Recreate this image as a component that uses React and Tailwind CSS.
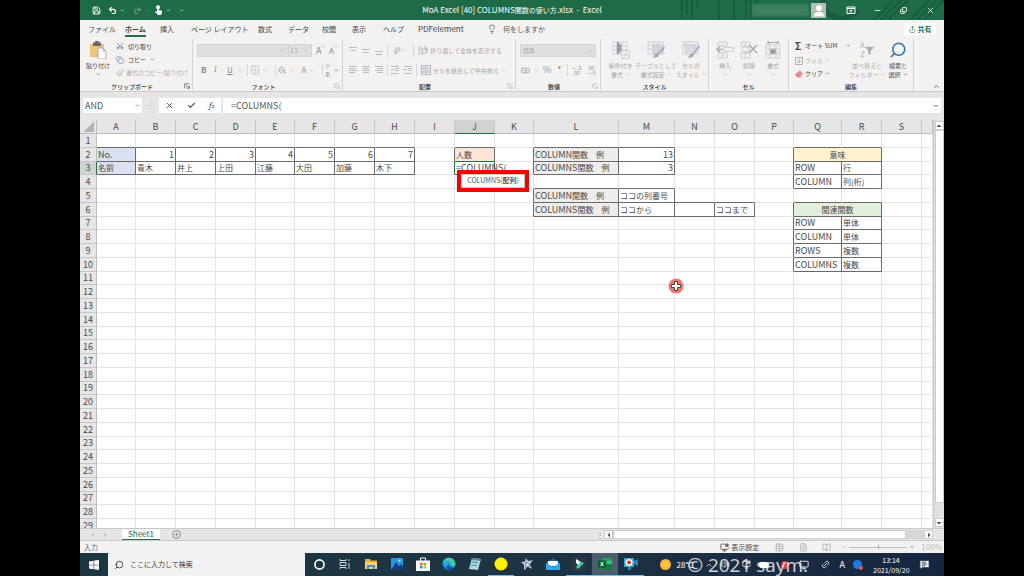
import React from 'react';
import {
  Save, Undo2, Redo2, ChevronDown, ChevronUp, Minus, X, Check, Scissors, Copy, Paintbrush,
  Lightbulb, Share, Search, Grid2x2, PaintBucket, Banknote, Eraser, Filter, Plus, Circle,
  MonitorCog, Table, BookOpen, FileText, Volume2, Monitor, Link2, MessageSquareText, User,
} from 'lucide-react';

const columns = [
  ['A', 39], ['B', 40], ['C', 40], ['D', 40], ['E', 39], ['F', 40], ['G', 40], ['H', 40], ['I', 40], ['J', 40],
  ['K', 39], ['L', 85], ['M', 56], ['N', 40], ['O', 40], ['P', 39], ['Q', 48], ['R', 40], ['S', 40], ['', null],
];

const cells = {
  A2: { t: 'No.', bg: 'bg-[#d9e1f2]' },
  B2: { t: '1', right: true }, C2: { t: '2', right: true }, D2: { t: '3', right: true }, E2: { t: '4', right: true },
  F2: { t: '5', right: true }, G2: { t: '6', right: true }, H2: { t: '7', right: true },
  A3: { j: '名前', bg: 'bg-[#d9e1f2]' },
  B3: { j: '青木' }, C3: { j: '井上' }, D3: { j: '上田' }, E3: { j: '江藤' }, F3: { j: '大田' }, G3: { j: '加藤' }, H3: { j: '木下' },
  J2: { j: '人数', bg: 'bg-[#fce4d6]' },
  J3: { t: '=COLUMNS(', active: true },
  L2: { t: 'COLUMN', j: '関数　例', bg: 'bg-[#ededed]' }, M2: { t: '13', right: true },
  L3: { t: 'COLUMNS', j: '関数　例', bg: 'bg-[#ededed]' }, M3: { t: '3', right: true },
  L5: { t: 'COLUMN', j: '関数　例', bg: 'bg-[#ededed]' }, M5: { j: 'ココの列番号' },
  L6: { t: 'COLUMNS', j: '関数　例', bg: 'bg-[#ededed]' }, M6: { j: 'ココから' }, N6: {}, O6: { j: 'ココまで' },
  Q2: { j: '意味', bg: 'bg-[#fff2cc]', span: 2 }, R2: { hidden: true },
  Q3: { t: 'ROW' }, R3: { j: '行' }, Q4: { t: 'COLUMN' }, R4: { j: '列(桁)' },
  Q6: { j: '関連関数', bg: 'bg-[#e2efda]', span: 2 }, R6: { hidden: true },
  Q7: { t: 'ROW' }, R7: { j: '単体' }, Q8: { t: 'COLUMN' }, R8: { j: '単体' },
  Q9: { t: 'ROWS' }, R9: { j: '複数' }, Q10: { t: 'COLUMNS' }, R10: { j: '複数' },
};

const at = (c, r) => (columns[c] ? cells[columns[c][0] + r] : undefined);

function Cell({ c, r }) {
  const cell = at(c, r);
  if (cell?.hidden) return null;
  const span = cell?.span || 1;
  const right = at(c + span, r);
  const below = at(c, r + 1);
  const rightColor = cell?.active || right?.active ? 'border-r-[#217346]' : cell || right ? 'border-r-[#6a6a6a]' : 'border-r-[#e4e4e4]';
  const bottomColor = cell?.active || below?.active ? 'border-b-[#217346]' : cell || below ? 'border-b-[#6a6a6a]' : 'border-b-[#e4e4e4]';
  const align = cell?.right ? 'text-right' : cell?.span ? 'text-center' : 'text-left';
  return (
    <td colSpan={span} className={`relative border-r border-b px-px py-0 whitespace-nowrap ${rightColor} ${bottomColor} ${align} ${cell?.bg || ''}`}>
      {cell?.t && <span className="text-[9px]">{cell.t}</span>}
      {cell?.j && <span className="text-[8px]">{cell.j}</span>}
      {cell?.active && (
        <div className="absolute top-2 left-0.5 z-10 flex h-[22px] w-[72px] items-stretch border-4 border-[#f80000] bg-white text-[7px] text-[#555]">
          <span className="flex flex-1 items-center justify-center border border-[#c8c8c8]"><span>COLUMNS(<b>配列</b>)</span></span>
        </div>
      )}
    </td>
  );
}

function Sheet() {
  const rows = Array.from({ length: 29 }, (_, i) => i + 1);
  return (
    <table className="h-[413px] w-full table-fixed border-separate border-spacing-0 bg-white text-[9px] leading-[11px] text-[#4a4a4a]">
      <colgroup>
        <col className="w-[17px]" />
        {columns.map(([n, w], i) => <col key={i} style={w ? { width: w } : undefined} />)}
      </colgroup>
      <thead>
        <tr>
          <th aria-label="すべて選択" className="h-[14px] border-r border-b border-[#bdbdbd] bg-[#e6e6e6] p-0">
            <svg viewBox="0 0 16 13" className="ml-auto h-[13px] w-4"><path d="M14 1.500V12H3.500z" fill="#b3b3b3" /></svg>
          </th>
          {columns.map(([n], i) => (
            <th key={i} className={n === 'J'
              ? 'h-[14px] border-r border-b border-r-[#c6c6c6] border-b-[#217346] bg-[#d2d2d2] p-0 text-[9px] font-normal text-[#217346]'
              : 'h-[14px] border-r border-b border-r-[#c6c6c6] border-b-[#bdbdbd] bg-[#e6e6e6] p-0 text-[9px] font-normal'}>{n}</th>
          ))}
        </tr>
      </thead>
      <tbody>
        {rows.map((r) => (
          <tr key={r}>
            <th className={r === 3
              ? 'border-r border-b border-r-[#217346] border-b-[#c6c6c6] bg-[#d2d2d2] p-0 text-[9px] font-normal text-[#217346]'
              : 'border-r border-b border-r-[#bdbdbd] border-b-[#c6c6c6] bg-[#e6e6e6] p-0 text-[9px] font-normal'}>{r}</th>
            {columns.map((_, c) => <Cell key={c} c={c} r={r} />)}
          </tr>
        ))}
      </tbody>
    </table>
  );
}

const Caret = ({ dark }) => <ChevronDown size={5} strokeWidth={3} className={dark ? 'shrink-0 text-[#555]' : 'shrink-0 text-[#b0b0b0]'} />;
const Sep = () => <span className="h-3 w-px shrink-0 bg-[#d8d8d6]" />;

function Group({ label, width, launcher, children }) {
  return (
    <section className={`${width} my-px flex shrink-0 flex-col border-r border-[#d2d2d0]`}>
      <div className="h-[43px]">{children}</div>
      <div className="flex h-2 items-center text-[6px] font-medium text-[#333]">
        <span className="flex-1 text-center">{label}</span>
        {launcher && (
          <button aria-label={`${label}の設定`} className="mr-0.5">
            <svg viewBox="0 0 8 8" className="size-1.5" fill="none" stroke={launcher}><path d="M1 7V1h6M3 3l4 4M7 4v3H4" /></svg>
          </button>
        )}
      </div>
    </section>
  );
}

function Big({ icon, lines, dark, width }) {
  return (
    <button className={`${width} flex shrink-0 flex-col items-center text-[6px] leading-[9px] whitespace-nowrap ${dark ? 'text-[#444]' : 'text-[#a8a8a8]'}`}>
      <span className="mb-0.5 flex h-[18px] items-center">{icon}</span>
      <span>{lines[0]}</span>
      <span className="flex h-[9px] items-center gap-0.5">{lines[1]}<Caret dark={dark} /></span>
    </button>
  );
}

const Lines = ({ d }) => (
  <button aria-label="配置" className="w-[13px] shrink-0 text-[#bbb]">
    <svg viewBox="0 0 10 10" className="size-2.5" stroke="currentColor" fill="none"><path d={d} /></svg>
  </button>
);

const GridIcon = ({ children }) => (
  <svg viewBox="0 0 18 18" className="size-[18px]" fill="none" stroke="#cfcbd5">
    {children}
  </svg>
);

function TitleBar() {
  return (
    <header className="relative grid h-5 shrink-0 grid-cols-3 items-center bg-[#1d6b47] text-white">
      <svg viewBox="0 0 270 20" preserveAspectRatio="xMaxYMid slice" className="absolute right-0 h-5 w-[270px]" stroke="#185d3d" fill="none" strokeWidth="2">
        <path d="M8 0v18M13 0v15M18 0v18M23 0v10M45 0v20M60 0v20M72 0v18M77 0v18M82 0v14M200 20l20-20M207 20l20-20M214 20l20-20M236 20l20-20M243 20l20-20M250 20l20-20" />
        <path d="M148 0a20 20 0 0 0 36 10" strokeWidth="5" />
      </svg>
      <div className="relative flex items-center pl-3">
        <button aria-label="上書き保存" className="w-4"><Save size={9} strokeWidth={2.500} /></button>
        <button aria-label="元に戻す" className="w-3"><Undo2 size={9} strokeWidth={3} /></button>
        <ChevronDown size={5} strokeWidth={3} className="mr-2" />
        <button aria-label="やり直し" className="w-3 opacity-30"><Redo2 size={9} strokeWidth={3} /></button>
        <ChevronDown size={5} strokeWidth={3} className="mr-1 opacity-30" />
        <button aria-label="タッチ" className="w-3">
          <svg viewBox="0 0 10 10" className="size-2.5" fill="white"><circle cx="4" cy="2.200" r="2" /><path d="M3.200 2h1.600v3L8 5.800V8L7 10H4L1 6.800l.800-.700 1.400.900z" /></svg>
        </button>
        <ChevronDown size={5} strokeWidth={3} className="mr-2" />
        <ChevronDown size={5} strokeWidth={3} />
      </div>
      <h1 className="relative text-center text-[8px] whitespace-nowrap">MoA Excel [40] COLUMNS<span className="text-[7px]">関数の使い方</span>.xlsx &nbsp;-&nbsp; Excel</h1>
      <div className="relative flex items-center justify-end">
        <span className="h-3 w-[57px] bg-[#4a8a6c] opacity-70 blur-[1px]" />
        <span className="mr-3 ml-0.5 flex size-[15px] items-end justify-center overflow-hidden bg-[#b9bcba]"><User size={14} fill="white" strokeWidth={2} /></span>
        <button aria-label="リボンの表示オプション" className="flex w-[26px] justify-center">
          <svg viewBox="0 0 10 10" className="size-2.5" fill="none" stroke="white"><path d="M1 2h8v6.500H1zM1 3.500h8M5 8V5M3.500 6.200 5 4.700l1.500 1.500" /></svg>
        </button>
        <button aria-label="最小化" className="flex w-[26px] justify-center"><Minus size={9} /></button>
        <button aria-label="元のサイズに戻す" className="flex w-[27px] justify-center"><Copy size={7} strokeWidth={3} className="-scale-x-100 rotate-180" /></button>
        <button aria-label="閉じる" className="flex w-[27px] justify-center"><X size={9} /></button>
      </div>
    </header>
  );
}

const tabs = [
  ['ファイル', 'w-[37px]'], ['ホーム', 'w-[35px]'], ['挿入', 'w-[31px]'], ['ページ レイアウト', 'w-[67px]'], ['数式', 'w-[30px]'],
  ['データ', 'w-[34px]'], ['校閲', 'w-[30px]'], ['表示', 'w-[31px]'], ['ヘルプ', 'w-[35px]'], ['PDFelement', 'w-[69px]'],
];

function Tabs() {
  return (
    <nav className="flex h-[18px] shrink-0 items-center bg-[#f3f2f1] pl-2 text-[7px] text-[#444]">
      {tabs.map(([t, w]) => (
        <button key={t} className={`${w} shrink-0 text-left whitespace-nowrap`}>
          <span className={t === 'ホーム' ? 'inline-block border-b-2 border-[#217346] pt-0.5 leading-3 font-bold' : t === 'PDFelement' ? 'text-[8px]' : ''}>{t}</span>
        </button>
      ))}
      <label className="flex items-center gap-1.5">
        <Lightbulb size={10} strokeWidth={1.500} />
        <input aria-label="操作アシスト" placeholder="何をしますか" className="w-16 bg-transparent placeholder:text-[#555]" />
      </label>
      <button className="mr-2 ml-auto flex h-3 w-8 items-center justify-center gap-0.5 rounded-xs bg-white font-bold text-[#217346]"><Share size={7} />共有</button>
    </nav>
  );
}

function Ribbon() {
  return (
    <div className="flex h-[54px] shrink-0 border-b border-[#c8c8c8] bg-[#f3f2f1] whitespace-nowrap">
      <Group label="クリップボード" width="w-[113px]" launcher="#555">
        <div className="flex pt-0.5">
          <Big dark width="w-9" lines={['貼り付け', '']} icon={
            <svg viewBox="0 0 18 18" className="size-[18px]"><path d="M1 3h14v13H1z" fill="#efc377" /><path d="M4 1.500h2a2 2 0 0 1 4 0h2V5H4z" fill="#666" /><path d="M9 7h5l3 3v8H9z" fill="white" stroke="#999" strokeWidth=".8" /><path d="M14 7v3h3" fill="none" stroke="#999" strokeWidth=".8" /></svg>
          } />
          <div className="flex flex-col text-[6px] text-[#444]">
            <button className="flex h-[10px] items-center gap-1"><Scissors size={8} className="-rotate-90 text-[#4472a8]" />切り取り</button>
            <button className="mt-0.5 flex h-[13px] items-center gap-1"><Copy size={8} className="text-[#6d8bb0]" />コピー<Caret dark /></button>
            <button className="flex h-[13px] items-center gap-0.5 text-[#b0b0b0]"><Paintbrush size={8} />書式のコピー/貼り付け</button>
          </div>
        </div>
      </Group>
      <Group label="フォント" width="w-[150px]" launcher="#bbb">
        <div className="flex h-[23px] items-center pl-1 text-[#888]">
          <label className="flex h-[13px] w-[92px] items-center justify-end border border-[#d6d5d0] bg-[#e1dfdd] pr-1">
            <select aria-label="フォント" className="w-full appearance-none text-[7px]"><option></option></select><Caret />
          </label>
          <label className="flex h-[13px] w-[23px] items-center border border-l-0 border-[#d6d5d0] bg-[#e1dfdd] pr-0.5 pl-px text-[#aaa]">
            <select aria-label="フォント サイズ" className="w-full appearance-none text-[7px]"><option>11</option></select><Caret />
          </label>
          <button className="ml-1 flex w-[13px] text-[9px]">A<ChevronUp size={4} strokeWidth={3} /></button>
          <button className="flex text-[8px]">A<ChevronDown size={4} strokeWidth={3} /></button>
        </div>
        <div className="flex h-[16px] items-center pl-2 text-[8px] text-[#888]">
          <button className="w-[13px] text-left font-bold">B</button>
          <button className="w-[13px] text-left font-serif italic">I</button>
          <button className="w-[11px] text-left underline">U</button>
          <Caret /><span className="w-1" /><Sep />
          <button aria-label="罫線" className="ml-0.5 w-3 text-[#bbb]"><Grid2x2 size={10} strokeWidth={1.500} /></button><Caret /><span className="w-2" /><Sep />
          <button aria-label="塗りつぶし" className="mx-0.5 w-2.5 text-[#999]"><PaintBucket size={8} /></button><Caret />
          <button aria-label="フォントの色" className="ml-1 w-2.5">A</button><Caret /><span className="w-2" /><Sep />
          <button aria-label="ふりがな" className="mr-1 ml-0.5 flex flex-col text-[5px] leading-[8px]"><span>ア</span><span>亜</span></button><Caret dark />
        </div>
      </Group>
      <Group label="配置" width="w-[173px]" launcher="#bbb">
        <div className="flex h-[23px] items-center pl-[5px] text-[6px] text-[#a8a8a8]">
          <Lines d="M1 1.500h8M2 4.500h6" /><Lines d="M1 3.500h8M2 6.500h6" /><Lines d="M1 5.500h8M2 8.500h6" />
          <Sep /><button className="ml-1 -rotate-45 text-[7px]">ab</button><Caret /><span className="w-2" /><Sep />
          <button className="ml-1 flex items-center gap-0.5"><svg viewBox="0 0 10 10" className="size-2.5" fill="none" stroke="#b5b5b5"><path d="M1 0v9M3 1v3h2V2M7 0v4h2V2H7M9 4v3H3M5 5 3 7l2 2" /></svg>折り返して全体を表示する</button>
        </div>
        <div className="flex h-[16px] items-center pl-[5px] text-[6px] text-[#a8a8a8]">
          <Lines d="M1 1.500h8M1 3.500h6M1 5.500h8M1 7.500h6" /><Lines d="M1 1.500h8M2 3.500h6M1 5.500h8M2 7.500h6" /><Lines d="M1 1.500h8M3 3.500h6M1 5.500h8M3 7.500h6" />
          <Sep /><span className="w-0.5" />
          <Lines d="M1 1.500h8M5 3.500h4M5 5.500h4M1 8.500h8M4 4.500H1" /><Lines d="M1 1.500h8M5 3.500h4M5 5.500h4M1 8.500h8M0 4.500h4" />
          <Sep />
          <button className="ml-1 flex items-center gap-0.5"><svg viewBox="0 0 10 10" className="size-2.5" fill="none" stroke="#b5b0bd"><path d="M.5.5h9v9h-9zM.5 3h9M.5 7h9M5 .5V3M5 7v2.500M2 5h6" /></svg>セルを結合して中央揃え<Caret /></button>
        </div>
      </Group>
      <Group label="数値" width="w-[85px]" launcher="#bbb">
        <div className="flex h-[23px] items-center pl-1">
          <label className="flex h-[13px] w-[76px] items-center border border-[#d6d5d0] bg-[#e1dfdd] px-0.5 text-[6px] text-[#aaa]">
            <select aria-label="表示形式" className="w-full appearance-none"><option>標準</option></select><Caret />
          </label>
        </div>
        <div className="flex h-[16px] items-center gap-1 pl-[5px] text-[9px] text-[#999]">
          <button aria-label="通貨"><Banknote size={9} /></button><Caret />
          <button>%</button><button className="w-2 font-bold">❜</button><Sep />
          <button className="w-2 text-[5px] leading-[5px]">←.0<br />.00</button><button className="ml-0.5 text-[5px] leading-[5px]">.00<br />→.0</button>
        </div>
      </Group>
      <Group label="スタイル" width="w-[108px]">
        <div className="flex pt-0.5 pl-1">
          <Big width="w-[31px]" lines={['条件付き', '書式']} icon={<GridIcon><path d="M1 1h14v12H1zM1 5h14M1 9h14M10 1v12" /><path d="M6 1v12M8 3v8" stroke="#9e9aa2" strokeWidth="2.500" /><path d="M9.500 9.500h8v8h-8z" fill="#f3f2f1" /><path d="M11 14h5M15 11l-3 5" /></GridIcon>} />
          <Big width="w-[40px]" lines={['テーブルとして', '書式設定']} icon={<GridIcon><path d="M1 1h15v12H1zM1 4h15M1 8h15M6 1v12M11 1v12" /><path d="M6 5h10v8H6z" fill="#d8d4df" /><path d="m17 5-6 7-3 1-2 4 5-1 1-3 6-6z" fill="#a8a8a8" stroke="none" /></GridIcon>} />
          <Big width="w-[30px]" lines={['セルの', 'スタイル']} icon={<GridIcon><path d="M1 1h15v12H1zM1 4h15M4 1v12" /><path d="M4 4h10v7H4z" fill="#ddd9e4" /><path d="m17 4-6 8-3 1-2 4 5-1 1-3 6-7z" fill="#a8a8a8" stroke="none" /></GridIcon>} />
        </div>
      </Group>
      <Group label="セル" width="w-20">
        <div className="flex pt-0.5 pl-1">
          <Big width="w-6" lines={['挿入', '']} icon={<GridIcon><path d="M2 1h9v4H2zM6.500 1v4M2 12h9v5H2zM6.500 12v5M8 6.500h9v4H8z" /><path d="M7 8.500H1m3-3-3 3 3 3" stroke="#aaa" strokeWidth="1.500" /></GridIcon>} />
          <Big width="w-6" lines={['削除', '']} icon={<GridIcon><path d="M1 1h9v4H1zM5.500 1v4M1 12h9v5H1zM5.500 12v5M2 6.500h7v4H2z" /><path d="m9 4 8 8m0-8-8 8" stroke="#aaa" strokeWidth="1.500" /></GridIcon>} />
          <Big width="w-6" lines={['書式', '']} icon={<GridIcon><path d="M2 4h14v13H2zM2 8h14M2 13h14M6 4v13M12 4v13" /><path d="M6 8h6v5H6z" fill="#999" /><path d="M3 1.500h12M5 0 3 1.500 5 3M13 0l2 1.500L13 3" stroke="#aaa" /></GridIcon>} />
        </div>
      </Group>
      <Group label="編集" width="w-[125px]">
        <div className="flex pt-0.5 pl-1.5">
          <div className="flex w-14 flex-col text-[6px] text-[#444]">
            <button className="flex h-[9px] items-center gap-1"><span className="text-[10px] leading-none font-bold">Σ</span>オート SUM<span className="w-0.5" /><Caret dark /></button>
            <button className="mt-1 flex h-[13px] items-center gap-0.5 text-[#a8a8a8]"><svg viewBox="0 0 10 10" className="size-2" fill="none" stroke="#999"><path d="M.5.5h9v9h-9zM5 2v5M3 5l2 2 2-2" /></svg>フィル<Caret /></button>
            <button className="flex h-[13px] items-center gap-0.5"><Eraser size={8} fill="#f08a93" className="text-[#e0707c]" />クリア<Caret dark /></button>
          </div>
          <Big width="w-8" lines={['並べ替えと', 'フィルター']} icon={<span className="flex items-center text-[7px] leading-[9px] text-[#aaa]"><span className="flex flex-col"><span>A</span><span>Z</span></span><Filter size={9} fill="#aaa" /></span>} />
          <Big dark width="w-[30px]" lines={['検索と', '選択']} icon={<Search size={18} strokeWidth={2} className="-scale-x-100 text-[#2e75b6]" />} />
        </div>
      </Group>
      <button aria-label="リボンを折りたたむ" className="mr-1 mb-px ml-auto self-end"><ChevronUp size={7} strokeWidth={3} className="text-[#555]" /></button>
    </div>
  );
}

function FormulaBar() {
  return (
    <div className="flex h-7 shrink-0 items-start bg-[#e6e6e6] pt-1.5 pr-[3px] pl-[3px] text-[9px] text-[#555]">
      <div className="flex h-[15px] w-[59px] items-center bg-white px-0.5">
        <input aria-label="名前ボックス" defaultValue="AND" className="w-full min-w-0" /><Caret dark />
      </div>
      <span className="flex h-[15px] w-[17px] items-center justify-center text-[#aaa]">⋮</span>
      <div className="mr-0.5 flex h-[15px] w-[62px] items-center justify-around bg-white">
        <button aria-label="キャンセル"><X size={9} strokeWidth={2.500} /></button>
        <button aria-label="入力"><Check size={9} strokeWidth={3} /></button>
        <button className="font-serif text-[9px] italic">f<span className="text-[7px]">x</span></button>
      </div>
      <div className="flex h-[15px] flex-1 items-center bg-white pr-0.5 pl-2">
        <input aria-label="数式バー" defaultValue="=COLUMNS(" className="min-w-0 flex-1" />
        <ChevronDown size={6} strokeWidth={4} />
      </div>
    </div>
  );
}

const Arrow = ({ d, muted }) => <svg viewBox="0 0 6 6" className="size-1.5" fill={muted ? '#c0c0c0' : '#555'}><path d={d} /></svg>;
const LEFT = 'M4 .500V5.500L1.500 3z';
const RIGHT = 'M2 .500V5.500L4.500 3z';

function SheetBar() {
  return (
    <div className="flex h-[13px] shrink-0 items-center border-t border-b border-[#c8c8c8] bg-[#e6e6e6]">
      <button aria-label="前のシート" className="ml-2.5"><Arrow d={LEFT} muted /></button>
      <button aria-label="次のシート" className="ml-1.5"><Arrow d={RIGHT} muted /></button>
      <button className="ml-3.5 h-[11px] w-[38px] border-b border-[#217346] bg-white text-[8px] leading-[10px] text-[#217346]">Sheet1</button>
      <button aria-label="新しいシート" className="ml-3 flex size-[9px] items-center justify-center rounded-full border border-[#888] text-[#777]"><Plus size={7} /></button>
      <div className="ml-auto flex w-[348px] items-center">
        <span className="w-2 text-[8px] leading-none text-[#888]">⋮</span>
        <button aria-label="左へ" className="flex size-[9px] items-center justify-center border border-[#ccc] bg-white"><Arrow d={LEFT} /></button>
        <div className="h-[9px] flex-1 bg-[#d6d6d6] pr-[18px]"><div className="h-full border border-[#ccc] bg-white" /></div>
        <button aria-label="右へ" className="mr-[11px] flex size-[9px] items-center justify-center border border-[#ccc] bg-white"><Arrow d={RIGHT} /></button>
      </div>
    </div>
  );
}

function StatusBar() {
  return (
    <div className="flex h-3 shrink-0 items-center bg-[#f3f2f1] pr-0.5 pl-1 text-[7px] leading-none text-[#666]">
      <span>入力</span>
      <button className="mr-4 ml-auto flex items-center gap-0.5 text-[#444]"><MonitorCog size={9} />表示設定</button>
      <button aria-label="標準" className="mr-[15px]"><Table size={9} className="text-[#aaa]" /></button>
      <button aria-label="ページ レイアウト" className="mr-[14px]"><FileText size={9} className="text-[#aaa]" /></button>
      <button aria-label="改ページ プレビュー" className="mr-2.5"><BookOpen size={9} className="text-[#aaa]" /></button>
      <Minus size={6} className="text-[#999]" />
      <input type="range" aria-label="ズーム" defaultValue="50" className="mx-0.5 h-px w-[58px] appearance-none bg-[#bbb] [&::-webkit-slider-thumb]:h-1 [&::-webkit-slider-thumb]:w-px [&::-webkit-slider-thumb]:appearance-none [&::-webkit-slider-thumb]:bg-[#aaa]" />
      <Plus size={6} className="text-[#999]" />
      <span className="ml-1.5 text-[8px] text-[#bbb]">100%</span>
    </div>
  );
}

const apps = [
  ['Cortana', <Circle size={11} strokeWidth={3.500} />],
  ['タスク ビュー', <svg viewBox="0 0 12 12" className="size-3" fill="none" stroke="#cdd6da"><path d="M1 1v1.500h6V1M1 4.500h6v3H1zM1 11V9.500h6V11M10 1v2M10 5v6" /></svg>],
  ['エクスプローラー', <svg viewBox="0 0 14 14" className="size-[14px]"><path d="M1 2h5l1 1.500h6V12H1z" fill="#e9a936" /><path d="M1 5h12v7H1z" fill="#fbd56c" /><path d="M3 12V8h8v4H9v-2H5v2z" fill="#3c8fd0" /></svg>],
  ['フォト', <svg viewBox="0 0 14 14" className="size-[14px]"><path d="M1 1h12v12H1z" fill="#2196e3" /><path d="m1 13 5-8 3 4 2-2 2 3v3z" fill="#123f80" /><circle cx="9.500" cy="3.500" r="1" fill="white" /></svg>],
  ['ストア', <svg viewBox="0 0 14 14" className="size-[14px]"><path d="M4.500 4V1h5v3" fill="none" stroke="white" /><path d="M0 3.500h14V14H0z" fill="white" /><path d="M4 6h2.500v2.500H4z" fill="#f25022" /><path d="M7.500 6H10v2.500H7.500z" fill="#7fba00" /><path d="M4 9h2.500v2.500H4z" fill="#00a4ef" /><path d="M7.500 9H10v2.500H7.500z" fill="#ffb900" /></svg>],
  ['Edge', <svg viewBox="0 0 14 14" className="size-[14px]"><circle cx="7" cy="7" r="6.500" fill="#1673c8" /><path d="M.6 6A6.500 6.500 0 0 1 13.500 7c0 3-4 3.500-5 1.500C10 5 4 2.500.600 6z" fill="#42cda0" /><path d="M.6 6C4 3 9 4 8.500 8.500c-1-2-4-1-3 2C2 10 1 8 .600 6z" fill="#2aa3e8" /><path d="M6 8c1 3 4 3.500 6.500 2.500A6.500 6.500 0 0 1 6 13c-2-2-1-4 0-5z" fill="#0c4f9c" /></svg>],
  ['メモ帳', <svg viewBox="0 0 14 14" className="size-[14px]"><path d="m4 1 9 1-3 11-9-1z" fill="#a9dbe6" /><path d="m4 1 9 1-.600 2-9-1z" fill="#5e8792" /><path d="m4 5 6 .700M3 8l6 .700" stroke="#4c8d9c" /></svg>],
  ['録画', <svg viewBox="0 0 14 14" className="size-[14px]"><circle cx="7" cy="7" r="6.500" fill="#fff200" /></svg>, true],
  ['スター', <svg viewBox="0 0 14 14" className="size-[14px]"><path d="m6 1 2 3 5-1-3 4 2 5-4-2-4 3v-5L1 5l4-.500z" fill="#b9c7e8" /><path d="M6 5v6l2-2h3z" fill="#fff" stroke="#33406a" strokeWidth=".6" /></svg>],
  ['メール', <svg viewBox="0 0 14 14" className="size-[14px]"><path d="m0 6 7-5 7 5v7H0z" fill="#1667b5" /><path d="M2 4h10v5H2z" fill="#fff" /><path d="m0 6 7 4 7-4v7H0z" fill="#2fa8ec" /></svg>],
  ['Filmora', <svg viewBox="0 0 14 14" className="size-[14px]"><path d="M0 0h14v14H0z" fill="#293842" /><path d="m4 2 5 3-3 3-2-2z" fill="#fff" /><path d="m12 6-6 6-2-2 5-5z" fill="#38d6b4" /></svg>, true],
  ['Excel', <svg viewBox="0 0 14 14" className="size-[14px]"><path d="M4 1h10v12H4z" fill="#21a366" /><path d="M9 4h5v3H9z" fill="#33c481" /><path d="M4 7h10v6H4z" fill="#107c41" /><path d="M0 3.500h8v7H0z" fill="#0b5c2f" /><path d="m2.500 5 3 4m0-4-3 4" stroke="#fff" /></svg>, true, true],
  ['カメラ', <svg viewBox="0 0 14 14" className="size-[14px]"><path d="M0 1h10v9H0z" fill="#38a9d6" /><path d="m10 4 4-2v7l-4-2zM4 10h3v3H4z" fill="#2789b0" /><circle cx="5" cy="5.500" r="3.500" fill="white" /><circle cx="5" cy="5.500" r="2" fill="#e0322b" /></svg>, true],
];

function Taskbar() {
  return (
    <footer className="relative flex h-[23px] shrink-0 items-center bg-linear-to-r from-[#1c3742] via-[#1e3442] to-[#172640] text-white">
      <button aria-label="スタート" className="flex w-7 justify-center">
        <svg viewBox="0 0 10 10" className="size-2.5" fill="white"><path d="M0 1.400 4.600.700v4H0zM5.200.600 10 0v4.700H5.200zM0 5.300h4.600v4L0 8.600zM5.200 5.300H10V10l-4.800-.700z" /></svg>
      </button>
      <label className="flex h-full w-[197px] items-center gap-1.5 bg-[#f2f2f2] pl-1.5 text-[7px] text-[#333]">
        <Search size={10} className="-scale-x-100" />
        <input aria-label="検索" placeholder="ここに入力して検索" className="min-w-0 flex-1 placeholder:text-[#333]" />
      </label>
      <div className="flex h-full pl-px">
        {apps.map(([name, icon, open, active]) => (
          <button key={name} aria-label={name} className={`flex w-[26px] items-center justify-center border-b ${open ? 'border-[#76b9ed]' : 'border-transparent'} ${active ? 'bg-[#4b5e6b]' : ''}`}>{icon}</button>
        ))}
      </div>
      <div className="ml-auto flex items-center text-[8px] leading-[11px]">
        <span className="mr-1.5 size-[11px] rounded-full bg-radial from-[#ffd34d] to-[#f59e1b]" />
        <span className="w-7">28°C</span>
        <ChevronUp size={8} className="mr-2" />
        <Volume2 size={9} className="mr-3" />
        <MonitorCog size={9} className="mr-2" />
        <span className="mr-3 h-1.5 w-2.5 rounded-full bg-white" />
        <span className="mr-2.5 size-2 rounded-full bg-[#d83b3b]" />
        <Monitor size={10} className="mr-3" />
        <Link2 size={9} className="mr-2.5 -rotate-45" />
        <span className="mr-2 text-[9px]">A</span>
        <svg viewBox="0 0 10 10" className="mr-2.5 size-2.5"><circle cx="4.500" cy="4.500" r="4.500" fill="#1f7ae0" /><circle cx="8" cy="8" r="2" fill="#e8573a" /></svg>
        <time className="mr-2.5 w-9 text-center text-[7px] leading-[10px]">13:14<br />2021/09/20</time>
        <MessageSquareText size={11} fill="white" stroke="#22344a" className="mr-3.5" />
      </div>
      <p className="absolute right-[136px] bottom-0 font-['Open_Sans',sans-serif] text-[19px] leading-[22px] font-medium whitespace-nowrap text-white/80">© 2021 saym.</p>
    </footer>
  );
}

export default function App() {
  return (
    <div className="h-screen bg-black px-20">
      <div className="flex h-full flex-col overflow-hidden font-['Noto_Sans_CJK_JP','Noto_Sans',sans-serif]">
        <TitleBar />
        <Tabs />
        <Ribbon />
        <FormulaBar />
        <main className="relative flex min-h-0 flex-1 bg-white">
          <div className="min-w-0 flex-1 overflow-hidden"><Sheet /></div>
          <div className="flex w-[11px] flex-col items-center border-l border-[#c8c8c8] bg-[#e0e0e0] py-px">
            <button aria-label="上へ" className="flex size-[9px] items-center justify-center border border-[#ccc] bg-white"><Arrow d="M.500 4h5L3 1.500z" /></button>
            <div className="w-[9px] flex-1 border border-[#ccc] bg-white" />
            <button aria-label="下へ" className="mt-[15px] flex size-[9px] items-center justify-center border border-[#ccc] bg-white"><Arrow d="M.500 2h5L3 4.500z" /></button>
          </div>
          <svg viewBox="0 0 16 16" className="absolute top-[158px] left-[588px] size-4">
            <circle cx="8" cy="8" r="7.500" fill="#f4736c" />
            <path d="M6.500 3.500h3v3h3v3h-3v3h-3v-3h-3v-3h3z" fill="#fff" stroke="#444" strokeWidth="1" />
          </svg>
        </main>
        <SheetBar />
        <StatusBar />
        <Taskbar />
      </div>
    </div>
  );
}
